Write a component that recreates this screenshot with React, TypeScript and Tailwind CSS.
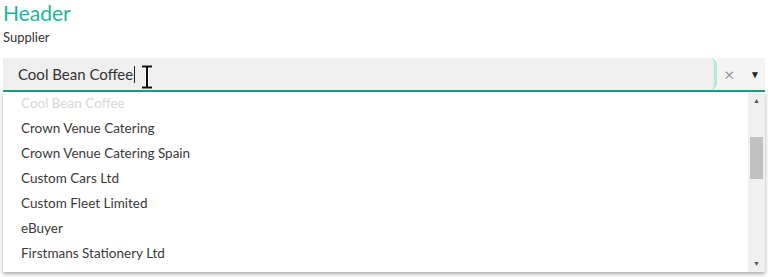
import React from "react";

const suppliers = [
  "Cool Bean Coffee",
  "Crown Venue Catering",
  "Crown Venue Catering Spain",
  "Custom Cars Ltd",
  "Custom Fleet Limited",
  "eBuyer",
  "Firstmans Stationery Ltd",
];

function IBeam() {
  return (
    <svg
      width="14"
      height="24"
      viewBox="0 0 14 24"
      className="absolute left-[140px] top-[65px]"
    >
      <path
        d="M2 1.5h10M2 22.5h10M7 1.5v21"
        stroke="#fff"
        strokeWidth="4"
        fill="none"
      />
      <path
        d="M2 1.5h10M2 22.5h10M7 1.5v21"
        stroke="#111"
        strokeWidth="2"
        fill="none"
      />
    </svg>
  );
}

export default function App() {
  return (
    <div
      className="relative w-[768px] h-[277px] bg-white overflow-hidden"
      style={{ fontFamily: "Lato, 'Open Sans', sans-serif" }}
    >
      <div className="px-[3px]">
        <h2 className="text-[21px] leading-[25px] text-[#1fb59c]">Header</h2>
        <div className="mt-[4px] text-[13px] leading-[16px] text-[#333]">
          Supplier
        </div>
        {/* select input */}
        <div className="mt-[13px] flex h-[34px] border-b-2 border-[#1a9e8a]">
          <div className="flex-1 flex items-center bg-[#efefef] rounded-r-[6px] border-r-[3px] border-[#b6e6dd] pl-[15px]">
            <span className="text-[15px] text-[#333]">Cool Bean Coffee</span>
            <span className="ml-[1px] w-px h-[17px] bg-[#222]" />
          </div>
          <div className="w-[48px] flex items-center justify-between bg-[#f4f4f4] pl-[7px] pr-[5px]">
            <span className="text-[18px] leading-none text-[#999]">×</span>
            <span className="text-[10px] leading-none text-[#222]">▼</span>
          </div>
        </div>
        {/* dropdown list */}
        <div className="flex h-[180px] bg-white shadow-[0_2px_4px_rgba(0,0,0,0.35)]">
          <ul className="flex-1 -mt-[1px]">
            {suppliers.map((s, i) => (
              <li
                key={s}
                className={`h-[25px] flex items-center pl-[18px] text-[13.5px] ${
                  i === 0 ? "text-[#d8d8d8]" : "text-[#3a3a3a]"
                }`}
              >
                {s}
              </li>
            ))}
          </ul>
          <div className="w-[17px] flex flex-col items-center bg-[#f0f0f0]">
            <span className="h-[17px] flex items-center text-[7px] text-[#555]">
              ▲
            </span>
            <div className="mt-[28px] w-[13px] h-[42px] bg-[#c1c1c1]" />
            <div className="flex-1" />
            <span className="h-[17px] flex items-center text-[7px] text-[#555]">
              ▼
            </span>
          </div>
        </div>
      </div>
      <IBeam />
    </div>
  );
}
